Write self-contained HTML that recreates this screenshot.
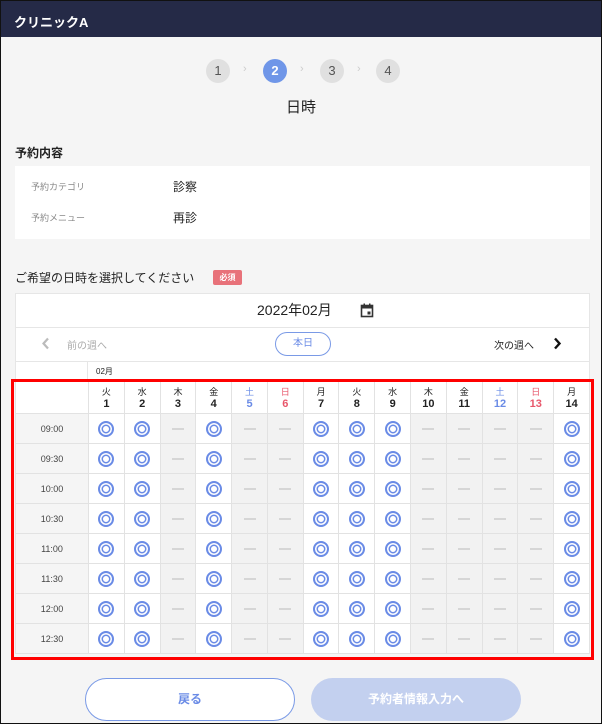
<!DOCTYPE html>
<html><head><meta charset="utf-8"><style>
*{box-sizing:border-box;margin:0;padding:0}
body{width:602px;height:724px;overflow:hidden;background:#f5f5f5;font-family:"Liberation Sans","Noto Sans CJK JP",sans-serif;color:#222;position:relative}
.abs{position:absolute}
.hdr{left:0;top:0;width:602px;height:37px;background:#252a47;color:#fff;font-weight:bold;font-size:13px;padding:12px 0 0 14px}
.st{width:24px;height:24px;border-radius:50%;background:#e0e0e0;color:#555;font-size:13px;text-align:center;line-height:24px;top:59px}
.ar{top:63px;color:#ccc;font-size:11px}
table{border-collapse:collapse;position:absolute;left:15px;top:381px;width:575px;table-layout:fixed;background:#fff}
td{border:1px solid #e2e2e2;text-align:center;font-size:9px;height:30px;padding:0;vertical-align:middle}
td.h{height:32px;line-height:12px;font-size:9px}
td.h b{font-size:11px;display:block}
.g{background:#f2f2f2}
.g::after{content:"";display:inline-block;width:12px;height:2px;background:#d6d6d6;vertical-align:middle}
.o::after{content:"";display:inline-block;width:12px;height:12px;border-radius:50%;border:2px solid #6a8be6;box-shadow:inset 0 0 0 1.5px #fff,inset 0 0 0 3px #6a8be6;vertical-align:middle}
.tm{background:#f5f5f5;color:#444;font-size:9px}
.bl{color:#6a8be6}.rd{color:#e8576b}
</style></head><body>
<div class="abs hdr">クリニックA</div>
<div class="abs st" style="left:206px">1</div>
<div class="abs ar" style="left:243px">›</div>
<div class="abs st" style="left:263px;background:#6f96e8;color:#fff;font-weight:bold">2</div>
<div class="abs ar" style="left:300px">›</div>
<div class="abs st" style="left:320px">3</div>
<div class="abs ar" style="left:357px">›</div>
<div class="abs st" style="left:376px">4</div>
<div class="abs" style="left:0;width:602px;text-align:center;top:96px;font-size:15px">日時</div>
<div class="abs" style="left:15px;top:144px;font-size:12px;font-weight:bold">予約内容</div>
<div class="abs" style="left:15px;top:166px;width:575px;height:73px;background:#fff"></div>
<div class="abs" style="left:31px;top:180px;font-size:9px;color:#888">予約カテゴリ</div>
<div class="abs" style="left:173px;top:178px;font-size:12px">診察</div>
<div class="abs" style="left:31px;top:211px;font-size:9px;color:#888">予約メニュー</div>
<div class="abs" style="left:173px;top:209px;font-size:12px">再診</div>
<div class="abs" style="left:15px;top:269px;font-size:12px">ご希望の日時を選択してください</div>
<div class="abs" style="left:213px;top:270px;width:29px;height:15px;background:#e8727a;color:#fff;font-size:8px;font-weight:bold;text-align:center;line-height:15px;border-radius:2px">必須</div>
<div class="abs" style="left:15px;top:293px;width:575px;height:88px;background:#fff;border:1px solid #e6e6e6"></div>
<div class="abs" style="left:15px;top:327px;width:575px;height:1px;background:#e6e6e6"></div>
<div class="abs" style="left:15px;top:361px;width:575px;height:1px;background:#e6e6e6"></div>
<div class="abs" style="left:87px;top:361px;width:1px;height:20px;background:#e6e6e6"></div>
<div class="abs" style="left:257px;top:300px;font-size:14px">2022年02月</div>
<svg class="abs" style="left:360px;top:303px" width="14" height="15" viewBox="0 0 14 15"><rect x="1.5" y="2.5" width="11" height="11" fill="none" stroke="#333" stroke-width="1.6"/><rect x="1.5" y="2.5" width="11" height="3" fill="#333"/><rect x="3.5" y="0.5" width="1.5" height="3" fill="#333"/><rect x="9" y="0.5" width="1.5" height="3" fill="#333"/><rect x="7.5" y="8.5" width="3" height="3" fill="#333"/></svg>
<svg class="abs" style="left:41px;top:337px" width="9" height="13"><path d="M7 1.5L2.5 6.5L7 11.5" fill="none" stroke="#bbb" stroke-width="2.2"/></svg>
<div class="abs" style="left:67px;top:337px;font-size:10px;color:#aaa">前の週へ</div>
<div class="abs" style="left:275px;top:332px;width:56px;height:24px;border:1.5px solid #7a9ae6;border-radius:12px;color:#6a8be6;font-size:10px;text-align:center;line-height:21px">本日</div>
<div class="abs" style="left:494px;top:337px;font-size:10px">次の週へ</div>
<svg class="abs" style="left:553px;top:337px" width="9" height="13"><path d="M2 1.5L6.5 6.5L2 11.5" fill="none" stroke="#111" stroke-width="2.4"/></svg>
<div class="abs" style="left:96px;top:366px;font-size:8px">02月</div>
<table>
<colgroup><col style="width:73px"><col span="14"></colgroup>
<tr><td class="h"></td><td class="h">火<b>1</b></td><td class="h">水<b>2</b></td><td class="h">木<b>3</b></td><td class="h">金<b>4</b></td><td class="h bl">土<b>5</b></td><td class="h rd">日<b>6</b></td><td class="h">月<b>7</b></td><td class="h">火<b>8</b></td><td class="h">水<b>9</b></td><td class="h">木<b>10</b></td><td class="h">金<b>11</b></td><td class="h bl">土<b>12</b></td><td class="h rd">日<b>13</b></td><td class="h">月<b>14</b></td></tr>
<tr><td class="tm">09:00</td><td class="o"></td><td class="o"></td><td class="g"></td><td class="o"></td><td class="g"></td><td class="g"></td><td class="o"></td><td class="o"></td><td class="o"></td><td class="g"></td><td class="g"></td><td class="g"></td><td class="g"></td><td class="o"></td></tr>
<tr><td class="tm">09:30</td><td class="o"></td><td class="o"></td><td class="g"></td><td class="o"></td><td class="g"></td><td class="g"></td><td class="o"></td><td class="o"></td><td class="o"></td><td class="g"></td><td class="g"></td><td class="g"></td><td class="g"></td><td class="o"></td></tr>
<tr><td class="tm">10:00</td><td class="o"></td><td class="o"></td><td class="g"></td><td class="o"></td><td class="g"></td><td class="g"></td><td class="o"></td><td class="o"></td><td class="o"></td><td class="g"></td><td class="g"></td><td class="g"></td><td class="g"></td><td class="o"></td></tr>
<tr><td class="tm">10:30</td><td class="o"></td><td class="o"></td><td class="g"></td><td class="o"></td><td class="g"></td><td class="g"></td><td class="o"></td><td class="o"></td><td class="o"></td><td class="g"></td><td class="g"></td><td class="g"></td><td class="g"></td><td class="o"></td></tr>
<tr><td class="tm">11:00</td><td class="o"></td><td class="o"></td><td class="g"></td><td class="o"></td><td class="g"></td><td class="g"></td><td class="o"></td><td class="o"></td><td class="o"></td><td class="g"></td><td class="g"></td><td class="g"></td><td class="g"></td><td class="o"></td></tr>
<tr><td class="tm">11:30</td><td class="o"></td><td class="o"></td><td class="g"></td><td class="o"></td><td class="g"></td><td class="g"></td><td class="o"></td><td class="o"></td><td class="o"></td><td class="g"></td><td class="g"></td><td class="g"></td><td class="g"></td><td class="o"></td></tr>
<tr><td class="tm">12:00</td><td class="o"></td><td class="o"></td><td class="g"></td><td class="o"></td><td class="g"></td><td class="g"></td><td class="o"></td><td class="o"></td><td class="o"></td><td class="g"></td><td class="g"></td><td class="g"></td><td class="g"></td><td class="o"></td></tr>
<tr><td class="tm">12:30</td><td class="o"></td><td class="o"></td><td class="g"></td><td class="o"></td><td class="g"></td><td class="g"></td><td class="o"></td><td class="o"></td><td class="o"></td><td class="g"></td><td class="g"></td><td class="g"></td><td class="g"></td><td class="o"></td></tr>
</table>
<div class="abs" style="left:11px;top:379px;width:583px;height:281px;border:3px solid #f00"></div>
<div class="abs" style="left:85px;top:678px;width:210px;height:43px;border:1.5px solid #7a9ae6;border-radius:22px;background:#fff;color:#6a8be6;font-size:12px;font-weight:bold;text-align:center;line-height:40px">戻る</div>
<div class="abs" style="left:311px;top:678px;width:210px;height:43px;border-radius:22px;background:#c3d0ef;color:#fff;font-size:12px;font-weight:bold;text-align:center;line-height:43px">予約者情報入力へ</div>
<div class="abs" style="left:0;top:0;width:602px;height:724px;border:1px solid #111"></div>
</body></html>
